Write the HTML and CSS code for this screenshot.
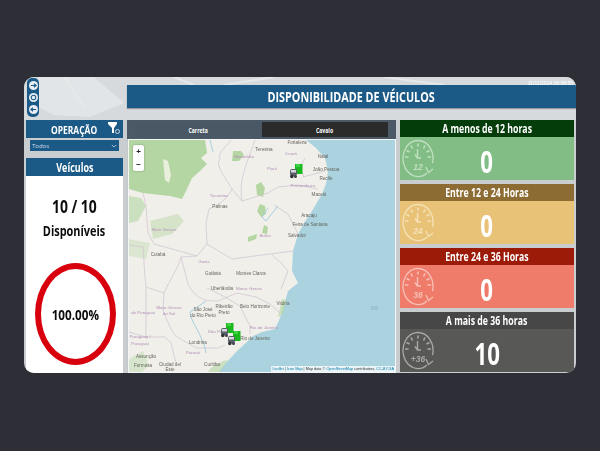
FILE: index.html
```html
<!DOCTYPE html>
<html lang="pt-BR">
<head>
<meta charset="utf-8">
<title>Disponibilidade de Veículos</title>
<link rel="stylesheet" href="styles.css">
</head>
<body>
<div class="stage">
  <div class="card">
    <svg class="backdrop" viewBox="0 0 552 43" preserveAspectRatio="none" aria-hidden="true">
      <path d="M14 0H70L100 26 66 40 30 38 14 30Z" fill="#e2e5e7"/>
      <path d="M40 0 L60 30 M250 0 L200 8 M360 0 L420 8 M150 0 L170 8" stroke="#e6e8ea" stroke-width="2" fill="none"/>
    </svg>
    <div class="timestamp">11/11/2024 16:38:55</div>
    <div class="top-row">
      <div class="top-left">
        <nav class="nav-pill">
          <span class="nav-dot"><svg viewBox="0 0 8 8"><path d="M1 4h6M4.500 2 7 4 4.500 6" class="nav-stroke"/></svg></span>
          <span class="nav-dot"><svg viewBox="0 0 8 8"><circle cx="4" cy="4" r="2.600" class="nav-stroke"/></svg></span>
          <span class="nav-dot"><svg viewBox="0 0 8 8"><path d="M7 4H1M3.500 2 1 4l2.500 2" class="nav-stroke"/></svg></span>
        </nav>
      </div>
      <h1 class="title"><span class="squeeze title-text">DISPONIBILIDADE DE VÉICULOS</span></h1>
    </div>
    <div class="content">
      <aside class="left">
        <div class="op-head">
          <span class="squeeze op-text">OPERAÇÃO</span>
          <svg class="filter" viewBox="0 0 12 12"><path d="M0 0h9v2L6 6v5H4V6L0 2z" fill="#fff"/><circle cx="9.500" cy="9.500" r="2" fill="none" stroke="#cfd8e0" stroke-width="1"/></svg>
        </div>
        <div class="select"><span>Todos</span><svg class="chev" viewBox="0 0 8 5"><path d="M1 1l3 3 3-3" fill="none" stroke="#d5e0ea" stroke-width="1"/></svg></div>
        <div class="veh-head"><span class="squeeze veh-text">Veículos</span></div>
        <div class="veh-body">
          <div class="count"><span class="squeeze count-text">10 / 10</span></div>
          <div class="avail"><span class="squeeze avail-text">Disponíveis</span></div>
          <div class="ring"><span class="squeeze ring-text">100.00%</span></div>
        </div>
      </aside>

      <main class="center">
        <div class="tabs">
          <button class="tab tab-light"><span class="squeeze tab-text">Carreta</span></button>
          <button class="tab tab-dark"><span class="squeeze tab-text">Cavalo</span></button>
        </div>
        <div class="map">
          <svg class="map-svg" viewBox="129 139 266 233" aria-label="Mapa do Brasil">
            <rect x="129" y="139" width="266" height="233" fill="#aad3df"/>
            <path class="land" d="M129 139H306L316 147 325 157 328 170 326 183 322 193 312 210 304 222 298 233 293 250 292 270 298 282 288 290 284 304 280 317 275 328 262 331 253 335 248 340 237 350 225 363 218 372H129Z"/>
            <g class="forest">
              <path d="M129 139H205L207 152 201 157 207 163 200 170 192 177 186 190 182 198 170 195 143 192 129 188Z"/>
              <path d="M129 195 141 197 146 205 138 220 129 222Z" opacity=".6"/>
              <path d="M150 220 178 213 184 220 172 233 153 238Z" opacity=".45"/>
              <path d="M129 238 150 242 146 258 129 255Z" opacity=".35"/>
              <path d="M233 150h8l3 4-5 6h-7z"/>
              <path d="M256 184l5-3 4 6-2 9-6-2z"/>
              <path d="M260 203l5 2 1 8-5 3-4-6z"/>
              <path d="M248 236l9-3-1 5-8 3z"/>
              <path d="M264 224l4 2-1 7-5-1z"/>
              <path d="M282 298l5 1-4 14-5 3z" opacity=".6"/>
              <path d="M211 367l12-7 5-1-8 12h-12z" opacity=".6"/>
              <path d="M129 358l14-8 6 14-8 8h-12z" opacity=".4"/>
            </g>
            <path class="pale" d="M163 158l5 2 3 14-2 8-4-3z"/>
            <g class="borders">
              <path d="M231 139 C222 150 218 152 220 158 214 164 228 180 232 188 228 196 222 203 209 208 L206 222 207 243 197 255 181 256 C178 268 170 278 164 292 L146 286 C144 268 144 258 143 246 L129 244"/>
              <path d="M143 192 L146 205 L148 232 154 243 L197 255"/>
              <path d="M181 256 L188 283 C197 300 207 300 218 300 L237 292 256 296 270 303 280 312"/>
              <path d="M164 292 L163 310 171 328 C175 338 187 340 196 347 L218 347 225 344"/>
              <path d="M255 139 C248 160 238 178 242 200 L232 188"/>
              <path d="M242 200 L268 192 278 186 298 184 318 188"/>
              <path d="M305 157 L300 166 304 176 M303 176 L325 170"/>
              <path d="M146 336 165 336 171 342 176 362 M146 286 146 336 129 331"/>
              <path d="M274 204 L288 213 L298 233 M272 254 L281 262 L288 270 L281 288"/>
              <path d="M207 243 L232 258 L262 254 L293 250"/>
              <path d="M207 287 L225 296 L240 305 L250 325 L250 333"/>
            </g>
            <g class="rivers">
              <path d="M206 352 C204 336 190 320 190 311 L206 300"/>
              <path d="M268 207 L262 216 L266 220 L278 205"/>
              <path d="M210 139l3 12"/>
            </g>
            <g class="city">
              <text x="297" y="143" text-anchor="middle">Fortaleza</text>
              <text x="264" y="150" text-anchor="middle">Teresina</text>
              <text x="323" y="157" text-anchor="middle">Natal</text>
              <text x="326" y="170" text-anchor="middle">João Pessoa</text>
              <text x="326" y="179" text-anchor="middle">Recife</text>
              <text x="319" y="195" text-anchor="middle">Maceió</text>
              <text x="309" y="216" text-anchor="middle">Aracaju</text>
              <text x="310" y="225" text-anchor="middle">Feira de Santana</text>
              <text x="297" y="236" text-anchor="middle">Salvador</text>
              <text x="220" y="207" text-anchor="middle">Palmas</text>
              <text x="158" y="255" text-anchor="middle">Cuiabá</text>
              <text x="213" y="274" text-anchor="middle">Goiânia</text>
              <text x="251" y="274" text-anchor="middle">Montes Claros</text>
              <text x="222" y="289" text-anchor="middle">Uberlândia</text>
              <text x="224" y="307" text-anchor="middle">Ribeirão</text>
              <text x="224" y="313" text-anchor="middle">Preto</text>
              <text x="255" y="307" text-anchor="middle">Belo Horizonte</text>
              <text x="283" y="304" text-anchor="middle">Vitória</text>
              <text x="203" y="310" text-anchor="middle">São José</text>
              <text x="203" y="316" text-anchor="middle">do Rio Preto</text>
              <text x="255" y="339" text-anchor="middle">Rio de Janeiro</text>
              <text x="198" y="343" text-anchor="middle">Londrina</text>
              <text x="146" y="357" text-anchor="middle">Assunção</text>
              <text x="143" y="366" text-anchor="middle">Formosa</text>
              <text x="170" y="365" text-anchor="middle">Ciudad del</text>
              <text x="170" y="370" text-anchor="middle">Este</text>
              <text x="212" y="365" text-anchor="middle">Curitiba</text>
            </g>
            <g class="state">
              <text x="244" y="157" text-anchor="middle">Maranhão</text>
              <text x="291" y="154" text-anchor="middle">Ceará</text>
              <text x="272" y="169" text-anchor="middle">Piauí</text>
              <text x="303" y="186" text-anchor="middle">Pernambuco</text>
              <text x="219" y="196" text-anchor="middle">Tocantins</text>
              <text x="164" y="230" text-anchor="middle">Mato Grosso</text>
              <text x="265" y="236" text-anchor="middle">Bahia</text>
              <text x="204" y="262" text-anchor="middle">Goiás</text>
              <text x="249" y="289" text-anchor="middle">Minas Gerais</text>
              <text x="169" y="308" text-anchor="middle">Mato Grosso</text>
              <text x="169" y="314" text-anchor="middle">do Sul</text>
              <text x="143" y="313" text-anchor="middle">do Paraguai</text>
              <text x="140" y="337" text-anchor="middle">Paraguay /</text>
              <text x="140" y="344" text-anchor="middle">Paraguái</text>
              <text x="218" y="332" text-anchor="middle">São Paulo</text>
              <text x="264" y="328" text-anchor="middle">Rio de Janeiro</text>
              <text x="193" y="353" text-anchor="middle">Paraná</text>
            </g>
            <defs>
              <g id="truck">
                <path d="M-2-7H5.500V3H-2Z" fill="#18b81e"/>
                <path d="M-1-7h4v3h-4z" fill="#3fd043"/>
                <rect x="-7" y="-2" width="7" height="7" rx="2" fill="#5a6068"/>
                <rect x="-6" y="-1" width="5" height="2.500" fill="#d4d8de"/>
                <circle cx="-5.200" cy="5.500" r="1.800" fill="#2e3136"/>
                <circle cx="-1.500" cy="5.500" r="1.500" fill="#3e4248"/>
              </g>
            </defs>
            <g transform="translate(297 170)"><use href="#truck"/></g>
            <g transform="translate(228 329)"><use href="#truck"/></g>
            <g transform="translate(235 337)"><use href="#truck"/></g>
            <text x="371" y="310" class="seamark">∞</text>
          </svg>
          <div class="zoom">
            <span class="zoom-btn">+</span>
            <span class="zoom-btn">−</span>
          </div>
          <div class="attribution"><span class="link">Leaflet</span> | <span class="link">Icon Map</span> | Map data © <span class="link">OpenStreetMap</span> contributors, <span class="link">CC-BY-SA</span></div>
        </div>
      </main>

      <section class="right">
        <article class="stat stat-green">
          <header class="stat-head"><span class="squeeze head-text">A menos de 12 horas</span></header>
          <div class="stat-body">
            <svg class="clock" viewBox="0 0 34 40"><use href="#dial"/><text x="16" y="31" class="clock-num">12</text></svg>
            <span class="stat-value squeeze">0</span>
          </div>
        </article>
        <article class="stat stat-yellow">
          <header class="stat-head"><span class="squeeze head-text">Entre 12 e 24 Horas</span></header>
          <div class="stat-body">
            <svg class="clock" viewBox="0 0 34 40"><use href="#dial"/><text x="16" y="31" class="clock-num">24</text></svg>
            <span class="stat-value squeeze">0</span>
          </div>
        </article>
        <article class="stat stat-red">
          <header class="stat-head"><span class="squeeze head-text">Entre 24 e 36 Horas</span></header>
          <div class="stat-body">
            <svg class="clock" viewBox="0 0 34 40"><use href="#dial"/><text x="16" y="31" class="clock-num">36</text></svg>
            <span class="stat-value squeeze">0</span>
          </div>
        </article>
        <article class="stat stat-gray">
          <header class="stat-head"><span class="squeeze head-text">A mais de 36 horas</span></header>
          <div class="stat-body">
            <svg class="clock" viewBox="0 0 34 40"><use href="#dial"/><text x="16" y="31" class="clock-num">+36</text></svg>
            <span class="stat-value squeeze">10</span>
          </div>
        </article>
      </section>
    </div>
    <svg class="defs" aria-hidden="true"><defs>
      <g id="dial" fill="none" stroke="currentColor">
        <path d="M25 33.900A15 18 0 1 1 30.500 24.100" stroke-width="1.300"/>
        <path d="M24 28l2.500 5.500 4.500-3.500" stroke-width="1.300"/>
        <path d="M16 4.500v3M9 6.500l1.500 3M23 6.500l-1.500 3M4.500 11.500l3 1.500M27.500 11.500l-3 1.500M3 18h3.500M25.500 18h3.500" stroke-width="1.600"/>
        <path d="M15.500 10v9h3.500M13 15.500l2.500 3.500" stroke-width="1.400"/>
      </g>
    </defs></svg>
  </div>
</div>
</body>
</html>
```
FILE: styles.css
```css
* { box-sizing: border-box; margin: 0; padding: 0; }
html, body { width: 600px; height: 451px; overflow: hidden; background: #2e2e37; }
body { font-family: "Open Sans", "Liberation Sans", sans-serif; }
.stage { padding: 77px 24px 78px; height: 451px; }
.card {
  position: relative; width: 552px; height: 296px; overflow: hidden;
  border-radius: 10px; background: #c9cdd0; padding: 0 0 0 2px;
  filter: blur(0.45px);
}
.squeeze { display: inline-block; white-space: nowrap; }
.backdrop { position: absolute; left: 0; top: 0; width: 552px; height: 43px; background: #d6dadd; }
.timestamp { position: absolute; right: 3px; top: 3px; font-size: 5px; color: #fff; font-family: "Liberation Sans", sans-serif; }
.defs { position: absolute; width: 0; height: 0; }

.top-row { position: relative; display: flex; height: 43px; gap: 4px; }
.top-left { width: 97px; padding: 1px 0 0 1px; }
.nav-pill {
  width: 12px; height: 39px; border-radius: 5px; background: #1b5a86;
  display: flex; flex-direction: column; align-items: center; justify-content: space-evenly;
}
.nav-dot { width: 9px; height: 9px; border-radius: 50%; background: #e8eef3; display: flex; align-items: center; justify-content: center; }
.nav-dot svg { width: 7px; height: 7px; }
.nav-stroke { fill: none; stroke: #1b5a86; stroke-width: 1.2; }
.title {
  margin-top: 8px; width: 449px; height: 23px; background: #1b5a86;
  color: #fff; font-size: 15px; font-weight: 700; text-align: center; line-height: 23px;
  box-shadow: 0 1px 1px rgba(0,0,0,.3);
}
.title-text { transform: scaleX(.72); }

.content { position: relative; display: flex; gap: 4px; height: 253px; }

.left { width: 97px; display: flex; flex-direction: column; }
.op-head {
  height: 18px; background: #1b5a86; color: #fff; font-size: 11px; font-weight: 700;
  display: flex; align-items: center; justify-content: center; position: relative;
}
.op-text { transform: scaleX(.77); }
.filter { position: absolute; right: 3px; top: 2px; width: 12px; height: 12px; }
.select {
  margin: 2px 4px 0; height: 11px; background: #1b5a86; color: #cfdce6; font-size: 6px;
  display: flex; align-items: center; justify-content: space-between; padding: 0 2px;
}
.chev { width: 6px; height: 4px; }
.veh-head {
  margin-top: 7px; height: 18px; background: #1b5a86; color: #fff; font-size: 12.5px; font-weight: 700;
  display: flex; align-items: center; justify-content: center;
}
.veh-text { transform: scaleX(.72); }
.veh-body { flex: 1; background: #fff; display: flex; flex-direction: column; align-items: center; color: #0c0c0c; }
.count { margin-top: 21px; font-size: 17px; font-weight: 700; line-height: 20px; }
.count-text { transform: scaleX(.82); }
.avail { margin-top: 6px; font-size: 14px; font-weight: 700; line-height: 16px; }
.avail-text { transform: scaleX(.78); }
.ring {
  margin-top: 24px; margin-left: 1px; width: 81px; height: 102px; border: 6px solid #d8000c; border-radius: 50%;
  display: flex; align-items: center; justify-content: center; font-size: 15px; font-weight: 700;
}
.ring-text { transform: scaleX(.78); }

.center { width: 269px; display: flex; flex-direction: column; background: #c4c8cb; }
.tabs { height: 19px; padding: 2px 8px; background: #4c5a68; display: flex; }
.tab { flex: 1; border: 0; color: #fff; font: 700 7.5px "Open Sans", sans-serif; }
.tab-text { transform: scaleX(.68); }
.tab-light { background: #4a5866; }
.tab-dark { background: #2b2b2b; }
.map { position: relative; flex: 1; margin: 1px 1px 1px 2px; overflow: hidden; outline: 1px solid #f4f6f7; }
.map-svg { display: block; width: 266px; height: 233px; }
.land { fill: #f1efe9; }
.forest path { fill: #b3d6a2; }
.pale { fill: #e9efdc; }
.borders path { fill: none; stroke: #cfc2d2; stroke-width: .7; }
.rivers path { fill: none; stroke: #a5cfdf; stroke-width: 1; }
.city text { font: 4.6px "Liberation Sans", sans-serif; fill: #65655e; }
.state text { font: 4.4px "Liberation Sans", sans-serif; fill: #b08fb8; }
.seamark { font: 11px "Liberation Sans", sans-serif; fill: #8fb3c4; }
.zoom {
  position: absolute; left: 4px; top: 5px; width: 11px; display: flex; flex-direction: column;
  background: #fff; border-radius: 2px; box-shadow: 0 0 2px rgba(0,0,0,.35);
}
.zoom-btn { height: 13px; text-align: center; font: 700 8px/13px "Liberation Sans", sans-serif; color: #222; }
.attribution {
  position: absolute; right: 0; bottom: 0; padding: 0 1px; background: rgba(255,255,255,.75);
  font: 3.8px/6px "Liberation Sans", sans-serif; color: #333; white-space: nowrap;
}
.link { color: #0078a8; }

.right { width: 174px; display: flex; flex-direction: column; gap: 4px; }
.stat { flex: none; height: 60px; display: flex; flex-direction: column; }
.stat-head {
  height: 17px; color: #fff; font-size: 11.5px; font-weight: 700;
  display: flex; align-items: center; justify-content: center;
}
.head-text { transform: scaleX(.76); }
.stat-body { position: relative; flex: 1; display: flex; align-items: center; justify-content: center; color: #fff; padding-top: 7px; }
.clock { position: absolute; left: 2px; top: 2px; width: 34px; height: 40px; }
.clock-num { font: italic 700 8.5px "Liberation Sans", sans-serif; fill: currentColor; stroke: none; text-anchor: middle; }
.stat-value { font-size: 30px; font-weight: 700; line-height: 1; transform: scaleX(.74); }
.stat-green .stat-head { background: #043c0a; }
.stat-green .stat-body { background: #82bd85; }
.stat-green .clock { color: #c1e0c1; }
.stat-yellow .stat-head { background: #8d6c33; }
.stat-yellow .stat-body { background: #e8c377; }
.stat-yellow .clock { color: #f5e2b8; }
.stat-red .stat-head { background: #9c1a08; }
.stat-red .stat-body { background: #ef7b6b; }
.stat-red .clock { color: #f8c0b6; }
.stat-gray .stat-head { background: #474747; }
.stat-gray .stat-body { background: #585856; }
.stat-gray .clock { color: #a8a8a6; }
```
